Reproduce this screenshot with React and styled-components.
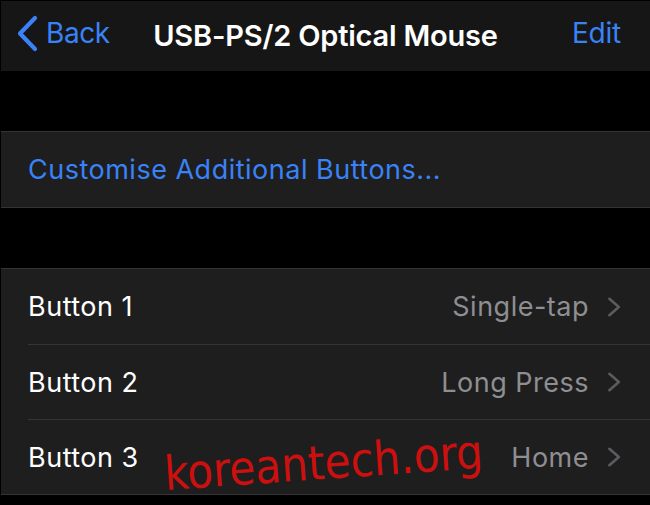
import React from "react";
import styled, { createGlobalStyle } from "styled-components";

const Global = createGlobalStyle`
  html, body { margin: 0; padding: 0; background: #000; }
  body { font-family: Inter, "Noto Sans", sans-serif; -webkit-font-smoothing: antialiased; }
`;

const Page = styled.div`
  position: relative;
  width: 650px;
  height: 505px;
  box-sizing: border-box;
  background: #000;
  padding: 1px 0 0 1px;
  overflow: hidden;
  display: flex;
  flex-direction: column;
`;

const NavBar = styled.header`
  height: 70px;
  box-sizing: border-box;
  background: #161616;
  display: grid;
  grid-template-columns: 1fr auto 1fr;
  align-items: center;
  padding: 0 15px 2px 15px;
`;

const BackButton = styled.div`
  display: flex;
  align-items: center;
  gap: 7px;
  color: #3a82f7;
  font-size: 28px;
  letter-spacing: -0.4px;
  margin-bottom: 4px;
`;

const Title = styled.h1`
  margin: 0;
  color: #fff;
  font-size: 29px;
  font-weight: 600;
  letter-spacing: -0.2px;
`;

const EditButton = styled.div`
  justify-self: end;
  color: #3a82f7;
  font-size: 28px;
  letter-spacing: -0.2px;
  margin: 0 14px 4px 0;
`;

const Gap = styled.div`
  height: ${(p) => p.$h}px;
  flex: none;
`;

const Section = styled.section`
  background: #1e1e1e;
  border-top: 1px solid #343436;
  border-bottom: 1px solid #343436;
`;

const Row = styled.div`
  height: 75px;
  display: flex;
  align-items: center;
  padding-left: 27px;
  & + & > div {
    border-top: 1px solid #343436;
  }
`;

const RowInner = styled.div`
  flex: 1;
  align-self: stretch;
  display: flex;
  align-items: center;
  padding-right: 29px;
`;

const BaseText = styled.span`
  font-size: 27px;
  letter-spacing: 0.5px;
`;

const LinkText = styled(BaseText)`
  color: #3a82f7;
`;

const Label = styled(BaseText)`
  color: #fff;
  flex: 1;
`;

const Value = styled(BaseText)`
  color: #8e8e93;
  margin-right: 19px;
`;

const Watermark = styled.div`
  position: absolute;
  left: 166px;
  top: 450px;
  color: #cc1010;
  font-family: "DejaVu Sans Condensed", "DejaVu Sans", sans-serif;
  font-size: 47px;
  line-height: 1;
  transform: rotate(-4deg);
  transform-origin: left bottom;
  white-space: nowrap;
  pointer-events: none;
`;

const BackChevron = () => (
  <svg width="23" height="37" viewBox="0 0 23 37" fill="none">
    <path d="M19 3 L4 18.5 L19 34" stroke="#3a82f7" strokeWidth="4.2" strokeLinecap="round" strokeLinejoin="round" />
  </svg>
);

const Chevron = () => (
  <svg width="13" height="20" viewBox="0 0 13 20" fill="none">
    <path d="M1.4 1.8 L10.8 10 L1.4 18.2" stroke="#5c5c60" strokeWidth="2.6" strokeLinecap="round" strokeLinejoin="round" />
  </svg>
);

const buttons = [
  { label: "Button 1", value: "Single-tap" },
  { label: "Button 2", value: "Long Press" },
  { label: "Button 3", value: "Home" },
];

export default function App() {
  return (
    <Page>
      <Global />
      <NavBar>
        <BackButton>
          <BackChevron />
          Back
        </BackButton>
        <Title>USB-PS/2 Optical Mouse</Title>
        <EditButton>Edit</EditButton>
      </NavBar>
      <Gap $h={60} />
      <Section>
        <Row>
          <LinkText>Customise Additional Buttons...</LinkText>
        </Row>
      </Section>
      <Gap $h={60} />
      <Section>
        {buttons.map((b) => (
          <Row key={b.label}>
            <RowInner>
              <Label>{b.label}</Label>
              <Value>{b.value}</Value>
              <Chevron />
            </RowInner>
          </Row>
        ))}
      </Section>
      <Watermark>koreantech.org</Watermark>
    </Page>
  );
}
